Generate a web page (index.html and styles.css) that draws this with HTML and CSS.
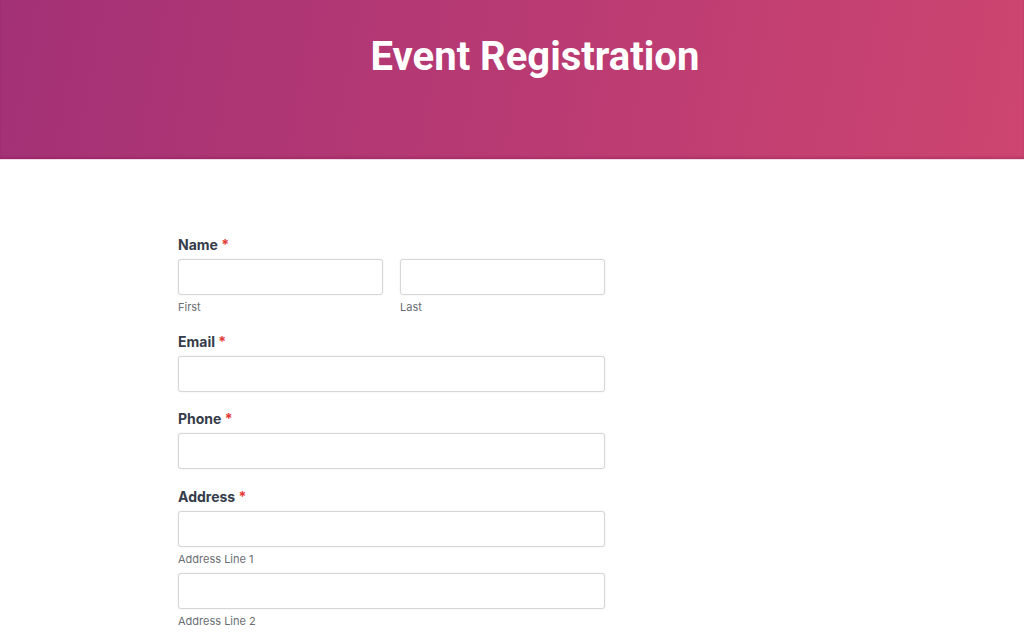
FILE: index.html
```html
<!DOCTYPE html>
<html lang="en">
<head>
<meta charset="utf-8">
<title>Event Registration</title>
<link rel="stylesheet" href="styles.css">
</head>
<body>
<header class="hero">
  <h1 class="hero-title">Event Registration</h1>
</header>
<main class="content">
  <form class="form">
    <div class="field">
      <div class="label">Name <span class="req">*</span></div>
      <div class="row">
        <div class="col">
          <input class="input" type="text">
          <div class="sublabel">First</div>
        </div>
        <div class="col">
          <input class="input" type="text">
          <div class="sublabel">Last</div>
        </div>
      </div>
    </div>
    <div class="field">
      <div class="label">Email <span class="req">*</span></div>
      <input class="input" type="text">
    </div>
    <div class="field">
      <div class="label">Phone <span class="req">*</span></div>
      <input class="input" type="text">
    </div>
    <div class="field">
      <div class="label">Address <span class="req">*</span></div>
      <input class="input" type="text">
      <div class="sublabel">Address Line 1</div>
      <input class="input input-next" type="text">
      <div class="sublabel">Address Line 2</div>
    </div>
  </form>
</main>
</body>
</html>
```
FILE: styles.css
```css
html, body {
  margin: 0;
  padding: 0;
  background: #ffffff;
  overflow: hidden;
}
body {
  font-family: Inter, "Liberation Sans", sans-serif;
  color: #353c4a;
}
.hero {
  height: 160px;
  box-sizing: border-box;
  background: linear-gradient(100deg, #a33176 0%, #b83a73 50%, #cd4570 100%);
  box-shadow: inset 0 -2px 2px rgba(120, 20, 70, 0.25);
  display: flex;
  justify-content: center;
  padding-top: 34px;
  border-bottom: 1px solid #f2dbe6;
}
.hero-title {
  margin: 0;
  font-family: Roboto, "Liberation Sans", sans-serif;
  font-weight: 700;
  font-size: 40px;
  line-height: 46px;
  color: #ffffff;
  padding-left: 46px;
}
.content {
  padding: 75px 0 0 178px;
}
.form {
  width: 427px;
  display: flex;
  flex-direction: column;
  gap: 17.5px;
}
.field {
  display: flex;
  flex-direction: column;
}
.label {
  font-size: 14px;
  font-weight: 700;
  line-height: 20px;
  margin-bottom: 4px;
  color: #353c4a;
}
.req {
  color: #e53935;
}
.row {
  display: flex;
  gap: 17px;
}
.col {
  flex: 1;
  display: flex;
  flex-direction: column;
}
.input {
  display: block;
  width: 100%;
  height: 36px;
  box-sizing: border-box;
  margin: 0;
  border: 1px solid #d6d6d6;
  border-radius: 3px;
  box-shadow: 0 0 2px rgba(0, 0, 0, 0.1);
  background: #ffffff;
  font: inherit;
}
.input-next {
  margin-top: 7px;
}
.sublabel {
  font-size: 11px;
  line-height: 14px;
  margin-top: 5px;
  color: #6a6d72;
}
```
